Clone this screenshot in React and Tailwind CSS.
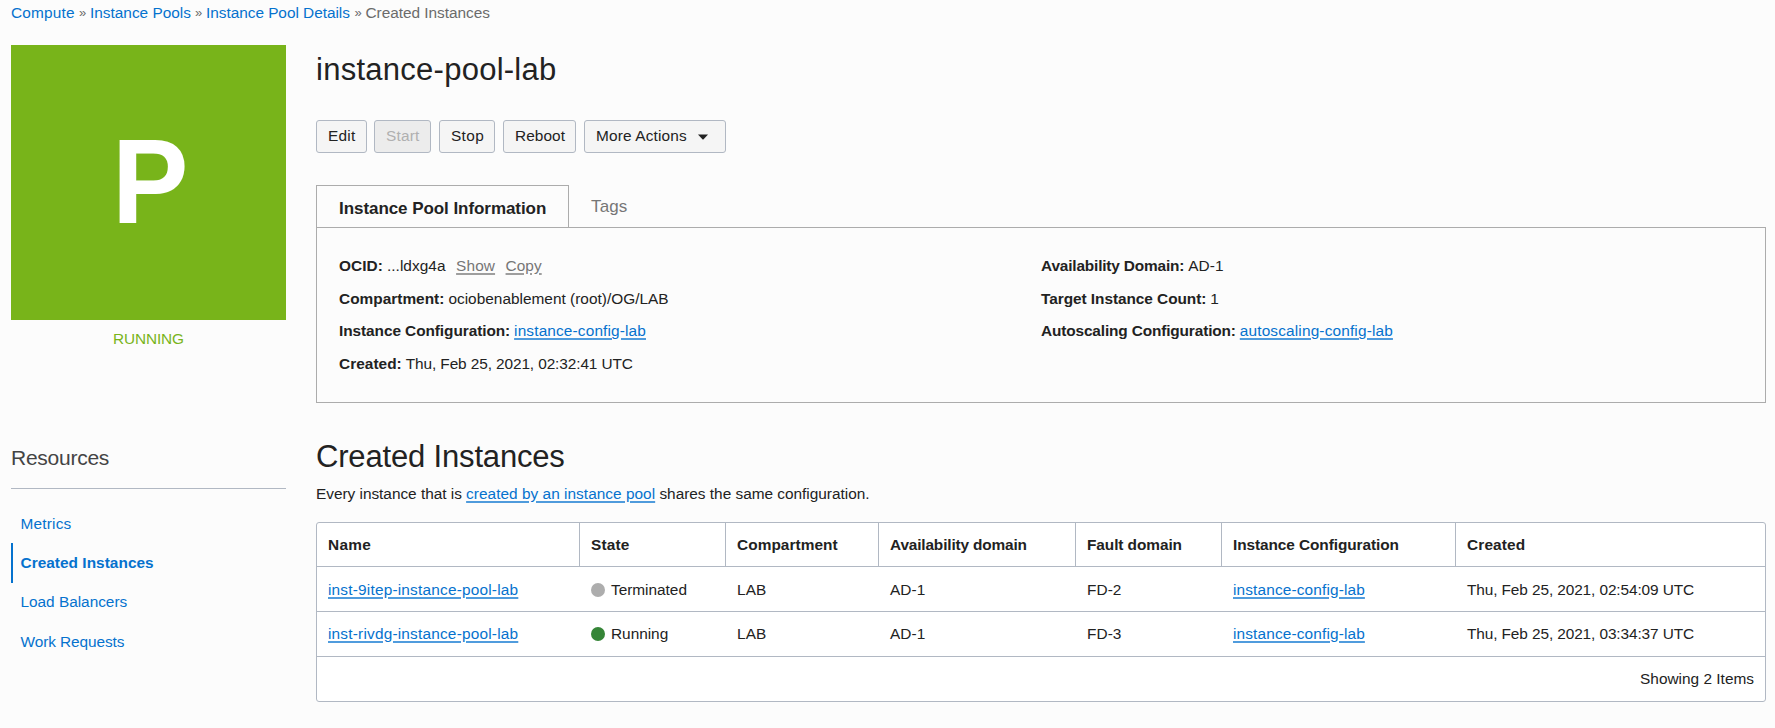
const linkBase =
  "text-[#0572ce] underline decoration-[#0572ce]/70 decoration-[1.5px] underline-offset-[2px]";
const mutedLink =
  "ml-[6.5px] text-[#767676] underline decoration-[#767676]/70 decoration-[1.5px] underline-offset-[2px]";

function Crumbs() {
  return (
    <nav className="flex h-[20px] items-center leading-[20px] text-[#6b6b6b]">
      <a className="w-[68px] tracking-[0.2px] text-[#0572ce]">Compute</a>
      <span className="w-[11px] text-[13px]">»</span>
      <a className="w-[105px] tracking-[-0.005px] text-[#0572ce]">Instance Pools</a>
      <span className="w-[11px] text-[13px]">»</span>
      <a className="w-[148.5px] tracking-[-0.035px] text-[#0572ce]">Instance Pool Details</a>
      <span className="w-[11px] text-[13px]">»</span>
      <span className="tracking-[-0.03px]">Created Instances</span>
    </nav>
  );
}

function Button({ className = "", children }) {
  return (
    <button
      className={
        "flex h-[33px] items-center rounded-[3px] border border-[#b1b8c3] px-[11px] pb-[2px] whitespace-nowrap " +
        className
      }
    >
      {children}
    </button>
  );
}

function Field({ label, labelClass, children }) {
  return (
    <div className="flex h-[32.6px] items-center gap-[4px] whitespace-nowrap">
      <b className={labelClass}>{label}</b>
      {children}
    </div>
  );
}

const resources = [
  { label: "Metrics", cls: "border-transparent tracking-[0.2px]" },
  { label: "Created Instances", cls: "border-[#0572ce] font-bold tracking-[0.035px]" },
  { label: "Load Balancers", cls: "border-transparent tracking-[-0.02px]" },
  { label: "Work Requests", cls: "border-transparent tracking-[-0.08px]" },
];

const headers = [
  { label: "Name", cls: "tracking-[0.3px]" },
  { label: "State", cls: "tracking-[0.15px]" },
  { label: "Compartment", cls: "tracking-[0.06px]" },
  { label: "Availability domain", cls: "tracking-[-0.15px]" },
  { label: "Fault domain", cls: "tracking-[-0.07px]" },
  { label: "Instance Configuration", cls: "tracking-[-0.08px]" },
  { label: "Created", cls: "tracking-[0.15px]" },
];

const rows = [
  {
    name: "inst-9itep-instance-pool-lab",
    state: "Terminated",
    dot: "bg-[#adadad]",
    fd: "FD-2",
    created: "Thu, Feb 25, 2021, 02:54:09 UTC",
    pad: "pt-[1px]",
  },
  {
    name: "inst-rivdg-instance-pool-lab",
    state: "Running",
    dot: "bg-[#358537]",
    fd: "FD-3",
    created: "Thu, Feb 25, 2021, 03:34:37 UTC",
    pad: "",
  },
];

const columns = "grid grid-cols-[263px_146px_153px_197px_146px_234px_1fr]";

function InstanceTable() {
  return (
    <div className="mt-[18px] h-[180px] rounded-[3px] border border-[#b1b8c3] bg-white whitespace-nowrap">
      <div className={columns + " h-[44px] border-b border-[#b1b8c3] font-bold"}>
        {headers.map((h, i) => (
          <div
            key={h.label}
            className={
              "flex items-center pl-[11px] " + h.cls + (i < headers.length - 1 ? " border-r border-[#b1b8c3]" : "")
            }
          >
            {h.label}
          </div>
        ))}
      </div>
      {rows.map((r) => (
        <div key={r.name} className={columns + " h-[45px] items-center border-b border-[#b1b8c3] " + r.pad}>
          <div className="pl-[11px]">
            <a className={linkBase + " tracking-[0.197px]"}>{r.name}</a>
          </div>
          <div className="flex items-center gap-[6px] pl-[11px]">
            <span className={"size-[14px] rounded-full " + r.dot} />
            <span className="tracking-[-0.02px]">{r.state}</span>
          </div>
          <div className="pl-[11px] tracking-[0.12px]">LAB</div>
          <div className="pl-[11px] tracking-[0.1px]">AD-1</div>
          <div className="pl-[11px] tracking-[0.06px]">{r.fd}</div>
          <div className="pl-[11px]">
            <a className={linkBase + " tracking-[0.142px]"}>instance-config-lab</a>
          </div>
          <div className="pl-[11px] tracking-[-0.1px]">{r.created}</div>
        </div>
      ))}
      <div className="flex h-[44px] items-center justify-end pr-[11px] tracking-[0.01px]">Showing 2 Items</div>
    </div>
  );
}

export default function App() {
  return (
    <div className="h-[728px] w-full overflow-hidden bg-[#fcfcfc] pt-[3px] pr-[9px] pl-[11px] font-['Liberation_Sans',Arial,sans-serif] text-[15.4px] leading-[20px] text-[#222222]">
      <Crumbs />
      <div className="mt-[22px] flex gap-[30px]">
        <aside className="w-[275px] shrink-0">
          <div className="flex h-[275px] items-center justify-center bg-[#78b41a] pb-[2px] pl-[4px] text-[120.6px] leading-[120px] font-bold text-white">
            <span className="scale-x-95">P</span>
          </div>
          <div className="mt-[9px] text-center tracking-[-0.15px] text-[#78b41a]">RUNNING</div>
          <h2 className="mt-[94px] h-[46px] border-b border-[#b1b8c3] text-[21px] leading-[30px] tracking-[-0.26px] text-[#444444]">
            Resources
          </h2>
          <ul className="mt-[15px] text-[#0572ce]">
            {resources.map((r) => (
              <li key={r.label} className={"flex h-[39.4px] items-center border-l-2 pl-[7.5px] " + r.cls}>
                {r.label}
              </li>
            ))}
          </ul>
        </aside>

        <main className="min-w-0 flex-1">
          <h1 className="mt-[5px] h-[39px] text-[31px] leading-[40px] tracking-[0.26px]">instance-pool-lab</h1>
          <div className="mt-[31px] flex">
            <Button className="mr-[7px] w-[51px] bg-[#f5f5f5] tracking-[0.22px]">Edit</Button>
            <Button className="mr-[8px] w-[57px] bg-[#ececec] tracking-[0.18px] text-[#b0b0b0]">Start</Button>
            <Button className="mr-[8px] w-[56px] bg-[#f5f5f5] px-[10px] tracking-[0.35px]">Stop</Button>
            <Button className="mr-[8px] w-[73px] bg-[#f5f5f5] px-[10px] tracking-[0.08px]">Reboot</Button>
            <Button className="w-[142px] gap-[11px] bg-[#f5f5f5] tracking-[0.16px]">
              More Actions
              <svg className="mt-[2px] h-[6px] w-[10px]" viewBox="0 0 10 6" fill="#222222">
                <path d="M0 .5h10L5.6 5.2q-.6.6-1.2 0z" />
              </svg>
            </Button>
          </div>

          <div className="mt-[32px] flex h-[42px] text-[17px]">
            <div className="flex w-[253px] items-center border border-b-0 border-[#acacac] pt-[4px] pl-[22px] font-bold tracking-[-0.06px]">
              Instance Pool Information
            </div>
            <div className="flex items-center pt-[2px] pl-[22px] tracking-[0.145px] text-[#767676]">Tags</div>
          </div>
          <section className="flex h-[176px] border border-[#acacac] pt-[22px] pl-[22px]">
            <div className="w-[702px]">
              <Field label="OCID:" labelClass="tracking-[0.06px]">
                <span className="tracking-[0.053px]">...ldxg4a</span>
                <a className={mutedLink + " tracking-[0.12px]"}>Show</a>
                <a className={mutedLink + " tracking-[0.05px]"}>Copy</a>
              </Field>
              <Field label="Compartment:" labelClass="tracking-[0.019px]">
                <span className="tracking-[0.01px]">ociobenablement (root)/OG/LAB</span>
              </Field>
              <Field label="Instance Configuration:" labelClass="tracking-[-0.07px]">
                <a className={linkBase + " tracking-[0.142px]"}>instance-config-lab</a>
              </Field>
              <Field label="Created:" labelClass="tracking-[0.04px]">
                <span className="tracking-[-0.1px]">Thu, Feb 25, 2021, 02:32:41 UTC</span>
              </Field>
            </div>
            <div>
              <Field label="Availability Domain:" labelClass="tracking-[-0.165px]">
                <span className="tracking-[0.05px]">AD-1</span>
              </Field>
              <Field label="Target Instance Count:" labelClass="tracking-[-0.051px]">
                <span>1</span>
              </Field>
              <Field label="Autoscaling Configuration:" labelClass="tracking-[-0.137px]">
                <a className={linkBase + " tracking-[0.155px]"}>autoscaling-config-lab</a>
              </Field>
            </div>
          </section>

          <h2 className="mt-[34px] h-[40px] text-[31px] leading-[40px] tracking-[-0.17px]">Created Instances</h2>
          <p className="mt-[7px] h-[20px] whitespace-nowrap">
            <span className="tracking-[-0.02px]">Every instance that is </span>
            <a className={linkBase + " tracking-[0.03px]"}>created by an instance pool</a>
            <span className="tracking-[-0.01px]"> shares the same configuration.</span>
          </p>
          <InstanceTable />
        </main>
      </div>
    </div>
  );
}
